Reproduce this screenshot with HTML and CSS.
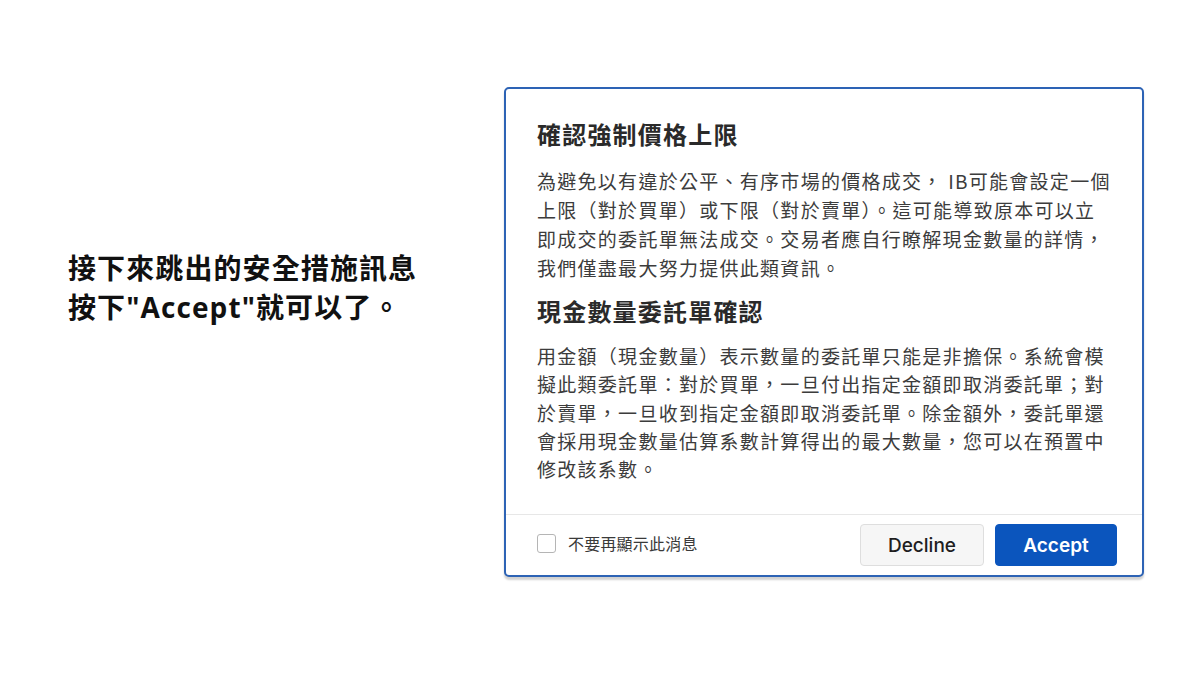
FILE: index.html
```html
<!DOCTYPE html>
<html lang="zh-Hant">
<head>
<meta charset="utf-8">
<link rel="stylesheet" href="styles.css">
</head>
<body>
<main class="page">
  <section class="note">
    <p class="note-line">接下來跳出的安全措施訊息</p>
    <p class="note-line">按下"Accept"就可以了。</p>
  </section>
  <section class="dialog">
    <div class="dialog-body">
      <h2 class="dialog-title">確認強制價格上限</h2>
      <p class="dialog-text">為避免以有違於公平、有序市場的價格成交， IB可能會設定一個<br>上限（對於買單）或下限（對於賣單）。這可能導致原本可以立<br>即成交的委託單無法成交。交易者應自行瞭解現金數量的詳情，<br>我們僅盡最大努力提供此類資訊。</p>
      <h2 class="dialog-title second">現金數量委託單確認</h2>
      <p class="dialog-text tight">用金額（現金數量）表示數量的委託單只能是非擔保。系統會模<br>擬此類委託單：對於買單，一旦付出指定金額即取消委託單；對<br>於賣單，一旦收到指定金額即取消委託單。除金額外，委託單還<br>會採用現金數量估算系數計算得出的最大數量，您可以在預置中<br>修改該系數。</p>
    </div>
    <div class="dialog-footer">
      <label class="check">
        <span class="check-box"></span>
        <span class="check-label">不要再顯示此消息</span>
      </label>
      <div class="actions">
        <button class="btn btn-decline">Decline</button>
        <button class="btn btn-accept">Accept</button>
      </div>
    </div>
  </section>
</main>
</body>
</html>
```

FILE: styles.css
```css
* { box-sizing: border-box; }
html, body { margin: 0; padding: 0; background: #ffffff; }
body {
  width: 1200px;
  height: 675px;
  overflow: hidden;
  font-family: "Noto Sans CJK TC", "Noto Sans", sans-serif;
}
.page {
  display: flex;
  align-items: flex-start;
  padding: 87px 0 0 68px;
  height: 100%;
}
.note {
  width: 436px;
  margin-top: 160px;
}
.note-line {
  margin: 0;
  font-family: "Open Sans", "Noto Sans CJK TC", sans-serif;
  font-size: 28px;
  font-weight: 700;
  line-height: 40px;
  letter-spacing: 1.1px;
  color: #111;
  white-space: nowrap;
}
.note-line:first-child { font-family: "Noto Sans CJK TC", sans-serif; }
.dialog {
  width: 640px;
  height: 490px;
  border: 2px solid #2d63b5;
  border-radius: 5px;
  background: #fff;
  box-shadow: 0 3px 2px rgba(0,0,0,0.18);
  display: flex;
  flex-direction: column;
}
.dialog-body {
  flex: 1;
  padding: 28px 20px 0 31px;
}
.dialog-title {
  margin: 0;
  font-size: 24px;
  font-weight: 700;
  line-height: 34px;
  letter-spacing: 1.2px;
  color: #2a2a2a;
}
.dialog-title.second { margin-top: 12px; }
.dialog-text {
  margin: 15px 0 0;
  font-size: 19px;
  line-height: 29px;
  letter-spacing: 1.28px;
  color: #3c3c3c;
  white-space: nowrap;
}
.dialog-text.tight { margin-top: 14px; line-height: 28.3px; }
.dialog-footer {
  border-top: 1px solid #e7e7e7;
  height: 61px;
  padding: 9px 25px 0 31px;
  display: flex;
  align-items: flex-start;
  justify-content: space-between;
}
.check {
  display: flex;
  align-items: center;
  gap: 12px;
  margin-top: 9px;
}
.check-box {
  width: 19px;
  height: 19px;
  border: 1.5px solid #b5b5b5;
  border-radius: 3px;
  background: #fff;
}
.check-label {
  font-size: 16px;
  line-height: 20px;
  color: #3a3a3a;
  letter-spacing: 0.2px;
}
.actions {
  display: flex;
  gap: 11px;
}
.btn {
  height: 42px;
  border-radius: 4px;
  font-family: "Inter", "Liberation Sans", sans-serif;
  font-size: 19px;
  font-weight: 500;
  padding: 0;
  cursor: pointer;
}
.btn-decline {
  width: 124px;
  background: #f6f6f6;
  border: 1px solid #dedede;
  color: #1e1e1e;
}
.btn-accept {
  width: 122px;
  background: #0b55bd;
  border: 1px solid #0b55bd;
  color: #ffffff;
  font-weight: 600;
}
```
